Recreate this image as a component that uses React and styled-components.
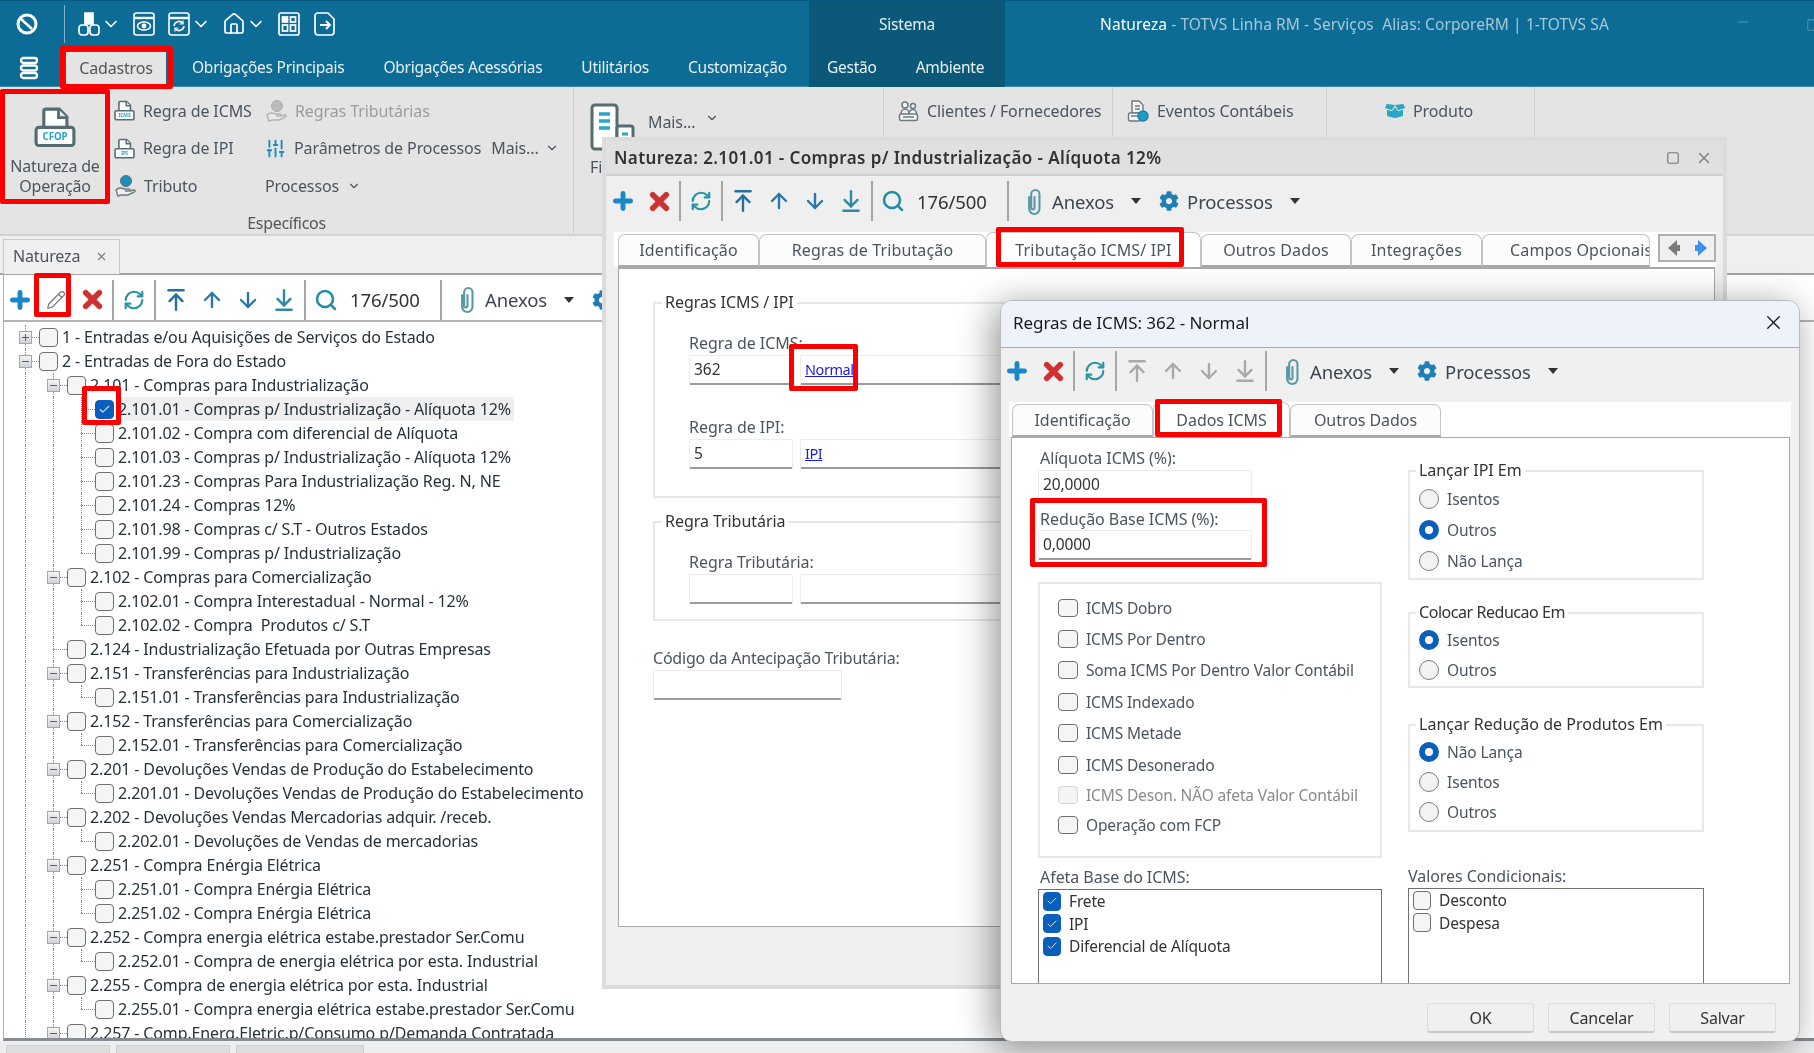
import React from 'react';
import styled, { createGlobalStyle } from 'styled-components';
import {
  Plus, X, RefreshCw, ArrowUpToLine, ArrowUp, ArrowDown, ArrowDownToLine, Search,
  Pencil, ChevronDown, SlidersVertical, Home, Check, Square, Minus,
} from 'lucide-react';
import { FaCog, FaBoxOpen } from 'react-icons/fa';

const Global = createGlobalStyle`
  html, body { margin: 0; padding: 0; background: #fff; }
  body { font-family: "Noto Sans", sans-serif; font-size: 15px; color: #333; }
  * { box-sizing: border-box; }
`;

const Page = styled.div`
  position: relative;
  width: 1814px;
  height: 1053px;
  overflow: hidden;
  display: flex;
  flex-direction: column;
  background: #fff;
  filter: blur(0.3px);
`;

/* ---- title bar ---- */

const Chrome = styled.div`
  height: 87px;
  flex: none;
  background: #0d6c96;
  border-top: 1px solid #0a5a80;
  border-bottom: 1px solid #3b8aae;
  color: #fff;
`;

const TopRow = styled.div`
  height: 48px;
  display: flex;
  align-items: center;
`;

const QuickBar = styled.div`
  width: 809px;
  padding: 0 0 3px 15px;
  display: flex;
  align-items: center;
  gap: 11px;
  height: 100%;
`;

const QuickSep = styled.div`
  width: 1px;
  height: 38px;
  background: #7fb2c9;
  margin: 0 1px 0 14px;
`;

const QuickBtn = styled.div`
  display: flex;
  align-items: center;
  color: #fff;
  svg { display: block; }
`;

const Context = styled.div`
  width: 196px;
  height: 100%;
  padding-bottom: 3px;
  background: #0c5878;
  display: flex;
  align-items: center;
  justify-content: center;
  font-size: 15.5px;
  letter-spacing: -0.2px;
  color: #e6f0f5;
`;

const WinTitle = styled.div`
  margin: 0 0 3px 95px;
  font-size: 15.5px;
  letter-spacing: 0.1px;
  white-space: pre;
  color: #a8c8d8;
  b { font-weight: 400; color: #fff; }
`;

const WinBtn = styled.div`
  position: absolute;
  top: ${p => p.$top}px;
  left: ${p => p.$left}px;
  color: #5d9ab7;
`;

const MenuRow = styled.div`
  height: 38px;
  display: flex;
  align-items: stretch;
`;

const MenuLeft = styled.div`
  width: 809px;
  display: flex;
  align-items: stretch;
`;

const StackBtn = styled.div`
  width: 66px;
  flex: none;
  display: flex;
  align-items: center;
  justify-content: center;
  padding-right: 8px;
`;

const FileTab = styled.div`
  width: 100px;
  flex: none;
  margin-top: 3px;
  margin-right: 26px;
  padding-bottom: 3px;
  background: #e4e4e4;
  color: #555;
  display: flex;
  align-items: center;
  justify-content: center;
  font-size: 16px;
  letter-spacing: -0.15px;
`;

const MenuItem = styled.div`
  flex: none;
  margin-right: ${p => p.$gap || 39}px;
  padding-bottom: 2px;
  display: flex;
  align-items: center;
  font-size: 15.5px;
  letter-spacing: -0.25px;
  white-space: nowrap;
  color: #e8f1f5;
`;

const ContextMenu = styled.div`
  width: 196px;
  background: #0c5878;
  display: flex;
  padding-left: 18px;
`;

/* ---- ribbon ---- */

const Ribbon = styled.div`
  height: 149px;
  flex: none;
  background: #e4e4e4;
  border-bottom: 2px solid #d2d2d2;
  display: flex;
`;

const RibbonGroup = styled.div`
  width: ${p => p.$w}px;
  border-right: 1px solid #cfcfcf;
  display: flex;
  flex-direction: column;
`;

const RibbonBody = styled.div`
  height: 126px;
  display: flex;
`;

const RibbonCaption = styled.div`
  text-align: center;
  font-size: 16px;
  letter-spacing: -0.3px;
  color: #555;
`;

const BigBtn = styled.div`
  width: 110px;
  padding-top: 20px;
  text-align: center;
  font-size: 16px;
  line-height: 20px;
  letter-spacing: -0.2px;
  color: #4a5560;
  svg { display: block; margin: 0 auto 9px; }
`;

const RibbonCol = styled.div`
  width: ${p => p.$w}px;
  padding-left: ${p => p.$pad || 4}px;
  padding-top: 5px;
  display: grid;
  grid-auto-rows: 37.5px;
`;

const RibbonItem = styled.div`
  display: flex;
  align-items: center;
  gap: 8px;
  font-size: 16px;
  letter-spacing: -0.1px;
  white-space: nowrap;
  color: ${p => (p.$off ? '#9c9c9c' : '#4a5560')};
  svg { flex: none; }
`;

const RibbonMore = styled.span`
  margin-left: 2px;
  display: inline-flex;
  align-items: center;
  gap: 6px;
`;

const SubGroup = styled.div`
  width: ${p => p.$w}px;
  height: 50px;
  padding: 0 0 3px ${p => p.$pad}px;
  border-right: 1px solid #cfcfcf;
  display: flex;
  align-items: center;
`;

const TallIcon = styled.div`
  padding: 16px 0 0 16px;
  width: 74px;
  font-size: 16px;
  color: #4a5560;
  svg { display: block; margin-bottom: 5px; }
`;

const MoreLabel = styled.div`
  padding-top: 24px;
  display: flex;
  align-items: flex-start;
  gap: 10px;
  font-size: 16px;
  letter-spacing: -0.1px;
  color: #4a5560;
`;

/* ---- workspace ---- */

const DocStrip = styled.div`
  height: 39px;
  flex: none;
  background: #efefef;
  padding: 3px 0 0 3px;
  border-bottom: 2px solid #a3a3a3;
`;

const DocTab = styled.div`
  width: 117px;
  height: 35px;
  padding: 0 11px 2px 9px;
  background: #f0f0f0;
  border: 1px solid #c9c9c9;
  border-bottom: none;
  display: flex;
  align-items: center;
  justify-content: space-between;
  font-size: 16px;
  letter-spacing: -0.15px;
  color: #4a5560;
`;

const Workspace = styled.div`
  flex: 1;
  min-height: 0;
  margin-left: 3px;
  border-left: 1px solid #aeaeae;
  border-bottom: 3px solid #858b90;
  display: flex;
  flex-direction: column;
  background: #fff;
`;

const WorkToolbarWrap = styled.div`
  height: 47px;
  flex: none;
  padding-top: 4px;
  background: #fff;
  border-bottom: 2px solid #b4b4b4;
`;

const Tree = styled.div`
  flex: 1;
  min-height: 0;
  overflow: hidden;
  padding: 3px 0 0 7px;
`;

const TreeRow = styled.div`
  height: 24px;
  display: flex;
  align-items: center;
`;

const Gutter = styled.div`
  width: 28px;
  height: 24px;
  flex: none;
  position: relative;
  &::before {
    content: '';
    position: absolute;
    left: 14px;
    top: 0;
    bottom: 0;
    border-left: 1px dotted #8c8c8c;
  }
`;

const TreeNode = styled.div`
  width: 28px;
  height: 24px;
  flex: none;
  position: relative;
  &::before {
    content: '';
    position: absolute;
    left: 14px;
    top: 0;
    bottom: ${p => (p.$last ? '12px' : '0')};
    border-left: 1px dotted #8c8c8c;
  }
  &::after {
    content: '';
    position: absolute;
    left: 14px;
    right: 0;
    top: 12px;
    border-top: 1px dotted #8c8c8c;
  }
`;

const Expander = styled.div`
  position: absolute;
  z-index: 1;
  left: 8px;
  top: 6px;
  width: 13px;
  height: 13px;
  border: 1px solid #a5a5a5;
  background: linear-gradient(#f4f4f4, #cfd3d8);
  &::before {
    content: '';
    position: absolute;
    left: 2px;
    right: 2px;
    top: 5px;
    height: 1px;
    background: #2d6aa0;
  }
  ${p => p.$plus && `
    &::after {
      content: '';
      position: absolute;
      top: 2px;
      bottom: 2px;
      left: 5px;
      width: 1px;
      background: #2d6aa0;
    }
  `}
`;

const Box = styled.div`
  width: ${p => p.$size || 19}px;
  height: ${p => p.$h || 19}px;
  flex: none;
  border-radius: 4px;
  display: flex;
  align-items: center;
  justify-content: center;
  border: 1.5px solid ${p => (p.$on ? '#0a5fbd' : p.$off ? '#d6d6d6' : '#6f6f6f')};
  background: ${p => (p.$on ? '#0a5fbd' : p.$off ? '#f4f4f4' : '#f5f5f5')};
  color: #cfe2f7;
`;

const TreeText = styled.div`
  margin-left: 3px;
  padding: 0 3px 0 1px;
  height: 24px;
  line-height: 24px;
  font-size: 16px;
  letter-spacing: -0.13px;
  white-space: pre;
  color: #26323a;
  background: ${p => (p.$sel ? '#efefef' : 'transparent')};
`;

const BottomStrip = styled.div`
  height: 12px;
  flex: none;
  background: #eeeeee;
  display: flex;
  gap: 6px;
  padding: 4px 0 0 6px;
`;

const BottomTab = styled.div`
  width: ${p => p.$w}px;
  background: #dedede;
  border: 1px solid #d0d0d0;
  border-bottom: none;
`;

/* ---- toolbar shared by the panel and both windows ---- */

const Bar = styled.div`
  display: flex;
  align-items: center;
  height: 100%;
  margin-left: ${p => p.$shift || 0}px;
`;

const ToolBtn = styled.div`
  width: 36px;
  height: 36px;
  flex: none;
  display: flex;
  align-items: center;
  justify-content: center;
  margin-left: ${p => p.$ml || 0}px;
  color: ${p => p.$color || '#2a78a8'};
`;

const ToolSep = styled.div`
  width: 6px;
  height: 40px;
  flex: none;
  display: flex;
  justify-content: center;
  &::before {
    content: '';
    width: 2px;
    background: #a6a6a6;
  }
`;

const Counter = styled.div`
  width: 94px;
  flex: none;
  padding-left: 6px;
  font-size: 18.5px;
  letter-spacing: -0.1px;
  color: #333;
`;

const BarLabel = styled.div`
  font-size: 18.5px;
  letter-spacing: -0.12px;
  color: #3c4650;
  white-space: nowrap;
`;

const Caret = styled.div`
  width: 0;
  height: 0;
  margin: 0 ${p => p.$after || 0}px 0 17px;
  border-left: 5.5px solid transparent;
  border-right: 5.5px solid transparent;
  border-top: 6px solid #333;
`;

const ClipIcon = () => (
  <svg width="17" height="27" viewBox="0 0 16 26" fill="none" stroke="#5a98a6" strokeWidth="2">
    <path d="M8 8v11a1.600 1.600 0 0 1-3.200 0V6a4 4 0 0 1 8 0v14a5 5 0 0 1-10 0V8" />
  </svg>
);

function Toolbar({ shift, edit, search, muted, gearOnly }) {
  const nav = muted ? '#a9a9a9' : undefined;
  return (
    <Bar $shift={shift}>
      <ToolBtn $color="#1a87c9"><Plus size={26} strokeWidth={4.5} /></ToolBtn>
      {edit && <ToolBtn $color="#6f6f6f"><Pencil size={20} strokeWidth={1.4} /></ToolBtn>}
      <ToolBtn $color="#cf3030"><X size={27} strokeWidth={5} /></ToolBtn>
      <ToolSep />
      <ToolBtn $color="#2a94a4"><RefreshCw size={22} strokeWidth={2.4} /></ToolBtn>
      <ToolSep />
      <ToolBtn $color={nav || '#24709f'}><ArrowUpToLine size={26} strokeWidth={2.2} /></ToolBtn>
      <ToolBtn $color={nav || '#2a78a8'}><ArrowUp size={24} strokeWidth={2.4} /></ToolBtn>
      <ToolBtn $color={nav || '#2a78a8'}><ArrowDown size={24} strokeWidth={2.4} /></ToolBtn>
      <ToolBtn $color={nav || '#2c8aa6'}><ArrowDownToLine size={26} strokeWidth={2.2} /></ToolBtn>
      <ToolSep />
      {search && <ToolBtn $color="#1f8ea5"><Search size={24} strokeWidth={2.5} /></ToolBtn>}
      {search && <Counter>176/500</Counter>}
      {search && <ToolSep />}
      <ToolBtn $ml={5}><ClipIcon /></ToolBtn>
      <BarLabel>Anexos</BarLabel>
      <Caret $after={10} />
      <ToolBtn $color="#1d7fb5"><FaCog size={20} /></ToolBtn>
      {!gearOnly && <BarLabel>Processos</BarLabel>}
      {!gearOnly && <Caret />}
    </Bar>
  );
}

/* ---- windows ---- */

const NatWindow = styled.div`
  position: absolute;
  left: 602px;
  top: 137px;
  width: 1125px;
  height: 852px;
  border: 4px solid #dcdcdc;
  background: #efefef;
  display: flex;
  flex-direction: column;
`;

const NatTitle = styled.div`
  height: 35px;
  flex: none;
  background: #e0e0e0;
  border-bottom: 2px solid #cfcfcf;
  display: flex;
  align-items: center;
  justify-content: space-between;
  padding: 0 10px 0 8px;
  font-size: 17px;
  font-weight: 600;
  letter-spacing: 0.39px;
  color: #333;
`;

const NatControls = styled.div`
  display: flex;
  align-items: center;
  gap: 15px;
  color: #777;
`;

const NatBar = styled.div`
  height: 50px;
  margin-bottom: 6px;
  flex: none;
`;

const TabStrip = styled.div`
  height: 35px;
  flex: none;
  margin: 0 ${p => p.$mr}px 0 ${p => p.$ml}px;
  padding-left: ${p => p.$pad}px;
  background: #fff;
  display: flex;
  align-items: flex-end;
  font-size: 16px;
  letter-spacing: ${p => p.$ls};
`;

const Tab = styled.div`
  width: ${p => p.$w}px;
  height: ${p => (p.$active ? 35 : 33)}px;
  flex: none;
  overflow: hidden;
  display: flex;
  align-items: center;
  padding-left: ${p => p.$clip || 0}px;
  justify-content: ${p => (p.$clip ? 'flex-start' : 'center')};
  background: ${p => (p.$active ? '#fff' : '#fcfcfc')};
  border: 1px solid #c4c4c4;
  border-bottom: ${p => (p.$active ? 'none' : '2px solid #a9a9a9')};
  border-top-left-radius: 7px;
  border-top-right-radius: 7px;
  white-space: nowrap;
  color: #4a5560;
`;

const TabScroll = styled.div`
  margin: 0 0 5px auto;
  width: 58px;
  height: 28px;
  flex: none;
  border: 2px solid #b0b0b0;
  background: #f0f0f0;
  display: flex;
  align-items: center;
  justify-content: space-around;
`;

const NatPanel = styled.div`
  height: 660px;
  flex: none;
  margin: 0 8px 0 12px;
  padding: 33px 0 0 34px;
  background: #fff;
  border: 1px solid #a9a9a9;
  border-top-width: 2px;
`;

const GroupBox = styled.div`
  position: relative;
  width: ${p => p.$w}px;
  height: ${p => p.$h}px;
  margin-top: ${p => p.$mt || 0}px;
  padding: ${p => p.$pt || 0}px 0 0 ${p => p.$pl || 0}px;
  border: 2px solid #e8e8e8;
`;

const Legend = styled.div`
  position: absolute;
  top: -11px;
  left: ${p => p.$left || 7}px;
  padding: 0 3px;
  background: #fff;
  font-size: 16px;
  line-height: 18px;
  letter-spacing: ${p => p.$ls || '-0.05px'};
  color: #333;
  white-space: nowrap;
`;

const FieldLabel = styled.div`
  height: 18px;
  margin-top: ${p => p.$mt || 0}px;
  font-size: 16px;
  line-height: 19px;
  letter-spacing: ${p => p.$ls || '-0.05px'};
  color: #4a5560;
  white-space: nowrap;
`;

const DialogLabel = styled(FieldLabel)`
  padding-left: 2px;
`;

const FieldRow = styled.div`
  margin-top: 3px;
  display: flex;
  gap: 7px;
`;

const Input = styled.div`
  width: ${p => p.$w}px;
  height: 30px;
  flex: none;
  padding-left: 4px;
  margin-top: ${p => p.$mt || 0}px;
  background: #fff;
  border: 1px solid #ececec;
  border-bottom: 2px solid #9b9b9b;
  border-radius: 2px;
  font-size: 15.5px;
  line-height: 26px;
  color: #333;
`;

const Link = styled.a`
  font-size: 14.5px;
  letter-spacing: -0.45px;
  color: #1c1ce0;
  text-decoration: underline;
`;

const Dialog = styled.div`
  position: absolute;
  left: 1000px;
  top: 300px;
  width: 800px;
  height: 742px;
  display: flex;
  flex-direction: column;
  border: 1px solid #b9b9b9;
  border-radius: 12px;
  background: #f0f0f0;
  box-shadow: -6px 6px 36px rgba(0, 0, 0, 0.42);
`;

const DialogTitle = styled.div`
  height: 47px;
  flex: none;
  background: #eef3fb;
  border-bottom: 1px solid #a9adb2;
  border-radius: 11px 11px 0 0;
  display: flex;
  align-items: center;
  justify-content: space-between;
  padding: 0 14px 3px 12px;
  font-size: 17px;
  letter-spacing: -0.05px;
  color: #1a1a1a;
`;

const DialogBar = styled.div`
  height: 46px;
  margin-bottom: 8px;
  flex: none;
`;

const DialogPanel = styled.div`
  height: 547px;
  flex: none;
  margin: 0 9px 0 10px;
  padding: 11px 0 0 26px;
  background: #fff;
  border: 1px solid #a9a9a9;
  display: grid;
  grid-template-columns: 344px 296px;
  column-gap: 26px;
  overflow: hidden;
`;

const Column = styled.div`
  display: flex;
  flex-direction: column;
  padding-top: ${p => p.$pt || 0}px;
`;

const SmallInput = styled(Input)`
  width: 214px;
  letter-spacing: -0.1px;
`;

const CheckGroup = styled.div`
  height: 276px;
  margin-top: 22px;
  padding: 8px 0 0 18px;
  border: 2px solid #e8e8e8;
  flex: none;
`;

const CheckRow = styled.div`
  height: ${p => p.$h || 31.4}px;
  display: flex;
  align-items: center;
  gap: 8px;
  font-size: 15.5px;
  letter-spacing: -0.14px;
  white-space: nowrap;
  color: ${p => (p.$off ? '#8a8a8a' : '#4a5560')};
`;

const ListBox = styled.div`
  height: 100px;
  margin-top: 3px;
  padding: 0 0 0 4px;
  border: 1px solid #6d7178;
  flex: none;
`;

const ListRow = styled.div`
  height: 22.6px;
  display: flex;
  align-items: center;
  gap: 8px;
  font-size: 15.5px;
  letter-spacing: -0.15px;
  color: #333;
`;

const RadioGroup = styled(GroupBox)`
  width: 296px;
  flex: none;
`;

const RadioRow = styled.div`
  height: ${p => p.$h}px;
  display: flex;
  align-items: center;
  gap: 8px;
  font-size: 15.5px;
  letter-spacing: -0.1px;
  color: #4a5560;
`;

const Radio = styled.div`
  width: 20px;
  height: 20px;
  flex: none;
  border-radius: 50%;
  background: ${p => (p.$on ? '#fff' : '#f3f3f3')};
  border: ${p => (p.$on ? '6px solid #0a5fbd' : '1.5px solid #7c7c7c')};
`;

const DialogFoot = styled.div`
  flex: 1;
  display: flex;
  justify-content: flex-end;
  gap: 14px;
  padding: 19px 23px 0 0;
`;

const FootBtn = styled.div`
  width: 107px;
  height: 30px;
  display: flex;
  align-items: center;
  justify-content: center;
  background: #f0f0f0;
  border: 1px solid #dcdcdc;
  border-bottom: 2px solid #c9c9c9;
  border-radius: 3px;
  font-size: 16px;
  letter-spacing: -0.2px;
  color: #333;
`;

/* red call-outs drawn over the picture */
const Mark = styled.div`
  position: absolute;
  left: ${p => p.$x}px;
  top: ${p => p.$y}px;
  width: ${p => p.$w}px;
  height: ${p => p.$h}px;
  border: 5px solid #fa0000;
  border-radius: 2px;
  z-index: 5;
`;

/* ---- drawn icons ---- */

const RingIcon = () => (
  <svg width="24" height="24" viewBox="0 0 24 24" fill="none" stroke="#fff" strokeWidth="3">
    <circle cx="12" cy="12" r="9" />
    <path d="M6 7l11 10" strokeWidth="2.6" />
  </svg>
);

const NetIcon = () => (
  <svg width="24" height="28" viewBox="0 0 24 28" fill="none" stroke="#fff" strokeWidth="1.7">
    <path d="M8 3h8v11H8z" fill="#fff" />
    <rect x="2" y="15" width="9" height="10" rx="3" />
    <rect x="13" y="15" width="9" height="10" rx="3" />
  </svg>
);

const DocFrame = ({ children }) => (
  <svg width="24" height="26" viewBox="0 0 24 26" fill="none" stroke="#fff" strokeWidth="1.6">
    <rect x="2" y="2" width="20" height="22" rx="2.5" />
    <path d="M2 7h20" strokeWidth="2.4" />
    {children}
  </svg>
);

const GridIcon = () => (
  <svg width="24" height="26" viewBox="0 0 24 26" fill="none" stroke="#fff" strokeWidth="1.7">
    <rect x="2" y="2" width="20" height="22" rx="2" />
    <rect x="5.5" y="6" width="5" height="5" fill="#fff" />
    <rect x="13.5" y="6" width="5" height="5" />
    <rect x="5.5" y="14" width="5" height="6" />
    <rect x="13.5" y="14" width="5" height="6" />
  </svg>
);

const ExitIcon = () => (
  <svg width="24" height="26" viewBox="0 0 24 26" fill="none" stroke="#fff" strokeWidth="1.7">
    <path d="M3 5a3 3 0 0 1 3-3h10l6 6v13a3 3 0 0 1-3 3H6a3 3 0 0 1-3-3z" />
    <path d="M8 14h10M14 10l4 4-4 4" strokeWidth="1.9" />
  </svg>
);

const StackIcon = () => (
  <svg width="20" height="24" viewBox="0 0 20 24" fill="none" stroke="#fff" strokeWidth="2.4">
    <rect x="2" y="2" width="16" height="5" rx="2.5" />
    <rect x="2" y="9.5" width="16" height="5" rx="2.5" />
    <rect x="2" y="17" width="16" height="5" rx="2.5" />
  </svg>
);

const BadgeDoc = ({ w, h, label, fontSize }) => (
  <svg width={w} height={h} viewBox="0 0 60 57">
    <path d="M14 36V6a3 3 0 0 1 3-3h19l11 11v22" fill="#fff" stroke="#566c71" strokeWidth="4.5" />
    <path d="M35 3v12h12" fill="#e8e8e8" stroke="#566c71" strokeWidth="4" />
    <rect x="3" y="29" width="54" height="26" rx="4" fill="#fff" stroke="#566c71" strokeWidth="4.5" />
    <text x="30" y="47" textAnchor="middle" fontFamily="Noto Sans, sans-serif" fontWeight="700"
      fontSize={fontSize} fill="#27a8c8">{label}</text>
  </svg>
);

const CoinHand = ({ faded }) => (
  <svg width="22" height="24" viewBox="0 0 22 24" fill="none" opacity={faded ? 0.45 : 1}>
    <circle cx="12" cy="7" r="5.5" fill={faded ? '#8a8a8a' : '#1d8fb8'} stroke="#5d7075" />
    <path d="M2 16c3-3 6-2 8-1h5c1.500 0 1.500 2 0 2h-4 5l4-1c1-.2 1.500 1 .5 1.800L14 21H7l-3 1z"
      fill="#f0f0f0" stroke="#6c7b80" strokeWidth="1.400" />
  </svg>
);

const TowerIcon = () => (
  <svg width="46" height="48" viewBox="0 0 46 48" fill="none">
    <rect x="2" y="2" width="25" height="44" rx="3" fill="#fff" stroke="#566c71" strokeWidth="3" />
    <path d="M9 11h11M9 18h11M9 25h11" stroke="#27a8c8" strokeWidth="3.400" />
    <rect x="27" y="23" width="16" height="23" rx="2" fill="#fff" stroke="#566c71" strokeWidth="3" />
    <path d="M32 31h6M32 38h6" stroke="#27a8c8" strokeWidth="3" />
  </svg>
);

const ClientsIcon = () => (
  <svg width="21" height="22" viewBox="0 0 21 22" fill="#f4f4f4" stroke="#6c7b80" strokeWidth="1.500">
    <circle cx="7" cy="5" r="3" />
    <circle cx="15" cy="6" r="2.500" />
    <path d="M3 14c0-3 2-5 4-5s4 2 4 5M11 14c0-2.500 2-4.500 4-4.500s3.500 2 3.500 4.500" />
    <rect x="1.500" y="14" width="18" height="6.500" rx="1.500" />
    <path d="M5 17h11" />
  </svg>
);

const EventsIcon = () => (
  <svg width="22" height="24" viewBox="0 0 22 24" fill="#f4f4f4" stroke="#6c7b80" strokeWidth="1.400">
    <path d="M5 2h7l4 4v8H5z" />
    <rect x="1.500" y="14" width="12" height="8" rx="1.500" />
    <path d="M8 7h5M8 10h5M4 17h7" />
    <circle cx="16" cy="17" r="5" fill="#1d9bc9" stroke="#1d7fa8" />
  </svg>
);

const ScrollArrow = ({ right }) => (
  <svg width="14" height="18" viewBox="0 0 14 18">
    <path d={right ? 'M4 1l9 8-9 8v-5H1V6h3z' : 'M10 1L1 9l9 8v-5h3V6h-3z'} fill={right ? '#3d8fef' : '#7b7b7b'} />
  </svg>
);

/* ---- data ---- */

const TREE = [
  [0, 'plus', '1 - Entradas e/ou Aquisições de Serviços do Estado'],
  [0, 'minus', '2 - Entradas de Fora do Estado'],
  [1, 'minus', '2.101 - Compras para Industrialização'],
  [2, 'mid', '2.101.01 - Compras p/ Industrialização - Alíquota 12%', true],
  [2, 'mid', '2.101.02 - Compra com diferencial de Alíquota'],
  [2, 'mid', '2.101.03 - Compras p/ Industrialização - Alíquota 12%'],
  [2, 'mid', '2.101.23 - Compras Para Industrialização Reg. N, NE'],
  [2, 'mid', '2.101.24 - Compras 12%'],
  [2, 'mid', '2.101.98 - Compras c/ S.T - Outros Estados'],
  [2, 'last', '2.101.99 - Compras p/ Industrialização'],
  [1, 'minus', '2.102 - Compras para Comercialização'],
  [2, 'mid', '2.102.01 - Compra Interestadual - Normal - 12%'],
  [2, 'last', '2.102.02 - Compra  Produtos c/ S.T'],
  [1, 'mid', '2.124 - Industrialização Efetuada por Outras Empresas'],
  [1, 'minus', '2.151 - Transferências para Industrialização'],
  [2, 'last', '2.151.01 - Transferências para Industrialização'],
  [1, 'minus', '2.152 - Transferências para Comercialização'],
  [2, 'last', '2.152.01 - Transferências para Comercialização'],
  [1, 'minus', '2.201 - Devoluções Vendas de Produção do Estabelecimento'],
  [2, 'last', '2.201.01 - Devoluções Vendas de Produção do Estabelecimento'],
  [1, 'minus', '2.202 - Devoluções Vendas Mercadorias adquir. /receb.'],
  [2, 'last', '2.202.01 - Devoluções de Vendas de mercadorias'],
  [1, 'minus', '2.251 - Compra Enérgia Elétrica'],
  [2, 'mid', '2.251.01 - Compra Enérgia Elétrica'],
  [2, 'last', '2.251.02 - Compra Enérgia Elétrica'],
  [1, 'minus', '2.252 - Compra energia elétrica estabe.prestador Ser.Comu'],
  [2, 'last', '2.252.01 - Compra de energia elétrica por esta. Industrial'],
  [1, 'minus', '2.255 - Compra de energia elétrica por esta. Industrial'],
  [2, 'last', '2.255.01 - Compra energia elétrica estabe.prestador Ser.Comu'],
  [1, 'minus', '2.257 - Comp.Energ.Eletric.p/Consumo p/Demanda Contratada'],
];

const CHECKS = [
  ['ICMS Dobro'],
  ['ICMS Por Dentro'],
  ['Soma ICMS Por Dentro Valor Contábil'],
  ['ICMS Indexado'],
  ['ICMS Metade'],
  ['ICMS Desonerado'],
  ['ICMS Deson. NÃO afeta Valor Contábil', true],
  ['Operação com FCP'],
];

function TreeLine({ level, kind, text, sel }) {
  const expander = kind === 'plus' || kind === 'minus';
  return (
    <TreeRow>
      {Array.from({ length: level }).map((_, i) => <Gutter key={i} />)}
      <TreeNode $last={kind === 'last'}>
        {expander && <Expander $plus={kind === 'plus'} />}
      </TreeNode>
      <Box $on={sel}>{sel && <Check size={13} strokeWidth={2} />}</Box>
      <TreeText $sel={sel}>{text}</TreeText>
    </TreeRow>
  );
}

function RadioSet({ rowH, top, mt, title, ls, items }) {
  return (
    <RadioGroup $h={top} $mt={mt} $pt={11} $pl={9}>
      <Legend $left={6} $ls={ls}>{title}</Legend>
      {items.map(([label, on]) => (
        <RadioRow key={label} $h={rowH}><Radio $on={on} />{label}</RadioRow>
      ))}
    </RadioGroup>
  );
}

export default function App() {
  return (
    <Page>
      <Global />

      <Chrome>
        <TopRow>
          <QuickBar>
            <QuickBtn><RingIcon /></QuickBtn>
            <QuickSep />
            <QuickBtn><NetIcon /><ChevronDown size={20} strokeWidth={2} /></QuickBtn>
            <QuickBtn>
              <DocFrame>
                <ellipse cx="12" cy="15" rx="6.500" ry="4" />
                <circle cx="12" cy="15" r="1.600" fill="#fff" />
              </DocFrame>
            </QuickBtn>
            <QuickBtn>
              <DocFrame>
                <path d="M7 15a5 5 0 0 1 9-2.500M17 15a5 5 0 0 1-9 2.500" />
                <path d="M16 9.500v3.500h-3.500M8 20.500V17h3.500" strokeWidth="1.200" />
              </DocFrame>
              <ChevronDown size={20} strokeWidth={2} />
            </QuickBtn>
            <QuickBtn><Home size={24} strokeWidth={1.7} /><ChevronDown size={20} strokeWidth={2} /></QuickBtn>
            <QuickBtn><GridIcon /></QuickBtn>
            <QuickBtn><ExitIcon /></QuickBtn>
          </QuickBar>
          <Context>Sistema</Context>
          <WinTitle><b>Natureza</b> - TOTVS Linha RM - Serviços  Alias: CorporeRM | 1-TOTVS SA</WinTitle>
        </TopRow>
        <MenuRow>
          <MenuLeft>
            <StackBtn><StackIcon /></StackBtn>
            <FileTab>Cadastros</FileTab>
            <MenuItem>Obrigações Principais</MenuItem>
            <MenuItem>Obrigações Acessórias</MenuItem>
            <MenuItem>Utilitários</MenuItem>
            <MenuItem $gap={1}>Customização</MenuItem>
          </MenuLeft>
          <ContextMenu>
            <MenuItem>Gestão</MenuItem>
            <MenuItem $gap={1}>Ambiente</MenuItem>
          </ContextMenu>
        </MenuRow>
      </Chrome>
      <WinBtn $top={14} $left={1735}><Minus size={16} strokeWidth={1.500} /></WinBtn>
      <WinBtn $top={16} $left={1806}><Square size={14} strokeWidth={1.500} /></WinBtn>

      <Ribbon>
        <RibbonGroup $w={574}>
          <RibbonBody>
            <BigBtn>
              <BadgeDoc w={42} h={40} label="CFOP" fontSize={14} />
              Natureza de<br />Operação
            </BigBtn>
            <RibbonCol $w={151}>
              <RibbonItem><BadgeDoc w={21} h={21} label="ICMS" fontSize={14} />Regra de ICMS</RibbonItem>
              <RibbonItem><BadgeDoc w={21} h={21} label="IPI" fontSize={14} />Regra de IPI</RibbonItem>
              <RibbonItem><CoinHand />Tributo</RibbonItem>
            </RibbonCol>
            <RibbonCol $w={300}>
              <RibbonItem $off><CoinHand faded />Regras Tributárias</RibbonItem>
              <RibbonItem>
                <SlidersVertical size={21} color="#1d8fb8" strokeWidth={2.200} />
                Parâmetros de Processos
                <RibbonMore>Mais... <ChevronDown size={14} /></RibbonMore>
              </RibbonItem>
              <RibbonItem>Processos <ChevronDown size={14} /></RibbonItem>
            </RibbonCol>
          </RibbonBody>
          <RibbonCaption>Específicos</RibbonCaption>
        </RibbonGroup>
        <RibbonGroup $w={310}>
          <RibbonBody>
            <TallIcon><TowerIcon />Fi</TallIcon>
            <MoreLabel>Mais... <ChevronDown size={14} /></MoreLabel>
          </RibbonBody>
        </RibbonGroup>
        <SubGroup $w={229} $pad={14}>
          <RibbonItem><ClientsIcon />Clientes / Fornecedores</RibbonItem>
        </SubGroup>
        <SubGroup $w={214} $pad={14}>
          <RibbonItem><EventsIcon />Eventos Contábeis</RibbonItem>
        </SubGroup>
        <SubGroup $w={208} $pad={58}>
          <RibbonItem><FaBoxOpen size={20} color="#2aa6c4" />Produto</RibbonItem>
        </SubGroup>
      </Ribbon>

      <DocStrip>
        <DocTab>Natureza <X size={13} color="#777" /></DocTab>
      </DocStrip>

      <Workspace>
        <WorkToolbarWrap>
          <Toolbar shift={-2} edit search gearOnly />
        </WorkToolbarWrap>
        <Tree>
          {TREE.map(([level, kind, text, sel]) => (
            <TreeLine key={text} level={level} kind={kind} text={text} sel={sel} />
          ))}
        </Tree>
      </Workspace>

      <BottomStrip>
        <BottomTab $w={104} />
        <BottomTab $w={114} />
        <BottomTab $w={128} />
      </BottomStrip>

      <NatWindow>
        <NatTitle>
          Natureza: 2.101.01 - Compras p/ Industrialização - Alíquota 12%
          <NatControls>
            <Square size={14} strokeWidth={2} />
            <X size={18} strokeWidth={1.600} />
          </NatControls>
        </NatTitle>
        <NatBar><Toolbar shift={-1} search /></NatBar>
        <TabStrip $ml={8} $mr={7} $pad={4} $ls="0.15px">
          <Tab $w={141}>Identificação</Tab>
          <Tab $w={227}>Regras de Tributação</Tab>
          <Tab $w={215} $active>Tributação ICMS/ IPI</Tab>
          <Tab $w={150}>Outros Dados</Tab>
          <Tab $w={131}>Integrações</Tab>
          <Tab $w={168} $clip={27}>Campos Opcionais</Tab>
          <TabScroll><ScrollArrow /><ScrollArrow right /></TabScroll>
        </TabStrip>
        <NatPanel>
          <GroupBox $w={1047} $h={196} $pt={30} $pl={34}>
            <Legend>Regras ICMS / IPI</Legend>
            <FieldLabel>Regra de ICMS:</FieldLabel>
            <FieldRow>
              <Input $w={104}>362</Input>
              <Input $w={880}><Link>Normal</Link></Input>
            </FieldRow>
            <FieldLabel $mt={33}>Regra de IPI:</FieldLabel>
            <FieldRow>
              <Input $w={104}>5</Input>
              <Input $w={880}><Link>IPI</Link></Input>
            </FieldRow>
          </GroupBox>
          <GroupBox $w={1047} $h={100} $mt={23} $pt={30} $pl={34}>
            <Legend>Regra Tributária</Legend>
            <FieldLabel>Regra Tributária:</FieldLabel>
            <FieldRow>
              <Input $w={104} />
              <Input $w={880} />
            </FieldRow>
          </GroupBox>
          <FieldLabel $mt={28} $ls="-0.22px">Código da Antecipação Tributária:</FieldLabel>
          <Input $w={189} $mt={3} />
        </NatPanel>
      </NatWindow>

      <Dialog>
        <DialogTitle>
          Regras de ICMS: 362 - Normal
          <X size={23} strokeWidth={1.400} />
        </DialogTitle>
        <DialogBar><Toolbar shift={-2} muted /></DialogBar>
        <TabStrip $ml={8} $mr={8} $pad={3} $ls="-0.05px">
          <Tab $w={141}>Identificação</Tab>
          <Tab $w={137} $active>Dados ICMS</Tab>
          <Tab $w={151}>Outros Dados</Tab>
        </TabStrip>
        <DialogPanel>
          <Column>
            <DialogLabel>Alíquota ICMS (%):</DialogLabel>
            <SmallInput $mt={3}>20,0000</SmallInput>
            <DialogLabel $mt={10}>Redução Base ICMS (%):</DialogLabel>
            <SmallInput $mt={2}>0,0000</SmallInput>
            <CheckGroup>
              {CHECKS.map(([label, off]) => (
                <CheckRow key={label} $off={off} $h={off ? 29 : undefined}>
                  <Box $size={20} $h={18} $off={off} />{label}
                </CheckRow>
              ))}
            </CheckGroup>
            <DialogLabel $mt={10}>Afeta Base do ICMS:</DialogLabel>
            <ListBox>
              {['Frete', 'IPI', 'Diferencial de Alíquota'].map(label => (
                <ListRow key={label}>
                  <Box $size={18} $h={19} $on><Check size={12} strokeWidth={2} /></Box>{label}
                </ListRow>
              ))}
            </ListBox>
          </Column>
          <Column $pt={21}>
            <RadioSet
              top={110} rowH={31} title="Lançar IPI Em"
              items={[['Isentos'], ['Outros', true], ['Não Lança']]}
            />
            <RadioSet
              top={76} mt={32} rowH={30} title="Colocar Reducao Em" ls="-0.45px"
              items={[['Isentos', true], ['Outros']]}
            />
            <RadioSet
              top={108} mt={36} rowH={30} title="Lançar Redução de Produtos Em" ls="0.02px"
              items={[['Não Lança', true], ['Isentos'], ['Outros']]}
            />
            <FieldLabel $mt={35}>Valores Condicionais:</FieldLabel>
            <ListBox>
              {['Desconto', 'Despesa'].map(label => (
                <ListRow key={label}><Box $size={18} $h={19} />{label}</ListRow>
              ))}
            </ListBox>
          </Column>
        </DialogPanel>
        <DialogFoot>
          <FootBtn>OK</FootBtn>
          <FootBtn>Cancelar</FootBtn>
          <FootBtn>Salvar</FootBtn>
        </DialogFoot>
      </Dialog>

      <Mark $x={60} $y={46} $w={113} $h={43} />
      <Mark $x={0} $y={89} $w={110} $h={115} />
      <Mark $x={34} $y={273} $w={37} $h={44} />
      <Mark $x={82} $y={386} $w={39} $h={39} />
      <Mark $x={996} $y={227} $w={188} $h={40} />
      <Mark $x={789} $y={344} $w={69} $h={47} />
      <Mark $x={1155} $y={399} $w={127} $h={38} />
      <Mark $x={1030} $y={498} $w={237} $h={69} />
    </Page>
  );
}
